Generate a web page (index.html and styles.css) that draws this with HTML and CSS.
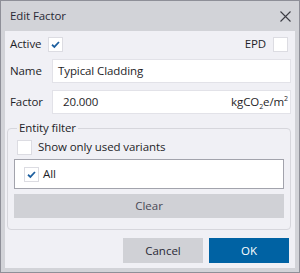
FILE: index.html
```html
<!DOCTYPE html>
<html>
<head>
	<meta charset="utf-8">
	<title>Edit Factor</title>
	<link rel="stylesheet" href="styles.css">
</head>
<body>
	<div class="dialog">
		<header class="titlebar">
			<span class="title">Edit Factor</span>
			<svg class="close" width="11" height="11" viewBox="0 0 11 11"><path d="M0.5 0.5 L10.5 10.5 M10.5 0.5 L0.5 10.5" stroke="#3c3c44" stroke-width="1.1" fill="none"/></svg>
		</header>
		<main class="content">
			<div class="row top-row">
				<label class="check-label">Active <span class="box checked"><svg viewBox="0 0 15 15"><path d="M3.5 7.8 L6.2 10.3 L11.5 4.6" /></svg></span></label>
				<label class="check-label">EPD <span class="box"></span></label>
			</div>
			<div class="row field">
				<span class="label">Name</span>
				<div class="input name-input">Typical Cladding</div>
			</div>
			<div class="row field">
				<span class="label">Factor</span>
				<div class="input factor-input"><span>20.000</span><span class="unit">kgCO<sub>2</sub>e/m<sup>2</sup></span></div>
			</div>
			<fieldset class="filter">
				<legend>Entity filter</legend>
				<label class="used-row"><span class="box"></span> Show only used variants</label>
				<div class="listbox">
					<label class="list-item"><span class="box checked"><svg viewBox="0 0 15 15"><path d="M3.5 7.8 L6.2 10.3 L11.5 4.6" /></svg></span> All</label>
				</div>
				<button class="btn clear">Clear</button>
			</fieldset>
			<div class="actions">
				<button class="btn">Cancel</button>
				<button class="btn primary">OK</button>
			</div>
		</main>
	</div>
</body>
</html>
```

FILE: styles.css
```css
html {
	font: 11.5px/16px "Open Sans", "Noto Sans", sans-serif;
	letter-spacing: -0.1px;
	color: #1e1e28;
}

body {
	margin: 0;
}

.dialog {
	box-sizing: border-box;
	width: 300px;
	height: 273px;
	border: 1px solid #8e8f98;
	background: #d2d3d8;
	padding: 0 4px 4px;
	display: flex;
	flex-direction: column;
}

.titlebar {
	height: 30px;
	flex: none;
	display: flex;
	align-items: center;
	justify-content: space-between;
	padding: 0 4px 0 5px;
}

.title {
	color: #2a2a36;
}

.content {
	flex: 1;
	background: #f0f0f5;
	padding: 5px 4px 0 5px;
}

.row {
	display: flex;
	align-items: center;
}

.top-row {
	height: 16px;
	justify-content: space-between;
	padding-right: 3px;
}

.check-label {
	display: flex;
	align-items: center;
	gap: 7px;
}

.box {
	box-sizing: border-box;
	width: 15px;
	height: 15px;
	background: #fff;
	border: 1px solid #dcdce2;
	display: inline-block;
	flex: none;
}

.box svg {
	display: block;
	width: 13px;
	height: 13px;
	fill: none;
	stroke: #1d5f9f;
	stroke-width: 2;
}

.field {
	margin-top: 7px;
}

.label {
	width: 42px;
	flex: none;
}

.input {
	box-sizing: border-box;
	flex: 1;
	height: 24px;
	background: #fff;
	border: 1px solid #e2e2e8;
	display: flex;
	align-items: center;
	justify-content: space-between;
	padding: 0 4px 0 5px;
}

.factor-input {
	padding-left: 10px;
	padding-right: 2px;
}

.unit sub, .unit sup {
	font-size: 7px;
	line-height: 0;
}

.filter {
	margin: 6px 0 0 -3px;
	padding: 0 6px 11px;
	border: 1px solid #d6d6dc;
	border-radius: 4px;
}

.filter legend {
	padding: 0 2px;
	margin-left: 3px;
}

.used-row {
	display: flex;
	align-items: center;
	gap: 6px;
	height: 20px;
	padding: 1px 0 0 3px;
}

.listbox {
	box-sizing: border-box;
	height: 30px;
	margin-top: 2px;
	background: #fff;
	border: 1px solid #a2a3ac;
	display: flex;
	align-items: center;
	padding-left: 9px;
}

.list-item {
	display: flex;
	align-items: center;
	gap: 4px;
}

.btn {
	font: inherit;
	border: 0;
	background: #d0d1d6;
	color: #2a2a36;
	height: 25px;
	width: 80px;
	padding: 0;
}

.clear {
	display: block;
	width: 100%;
	height: 24px;
	margin-top: 5px;
	color: #4a4a56;
}

.actions {
	display: flex;
	justify-content: flex-end;
	gap: 6px;
	margin-top: 8px;
	padding-right: 2px;
}

.primary {
	background: #0062a3;
	color: #fff;
}
```
